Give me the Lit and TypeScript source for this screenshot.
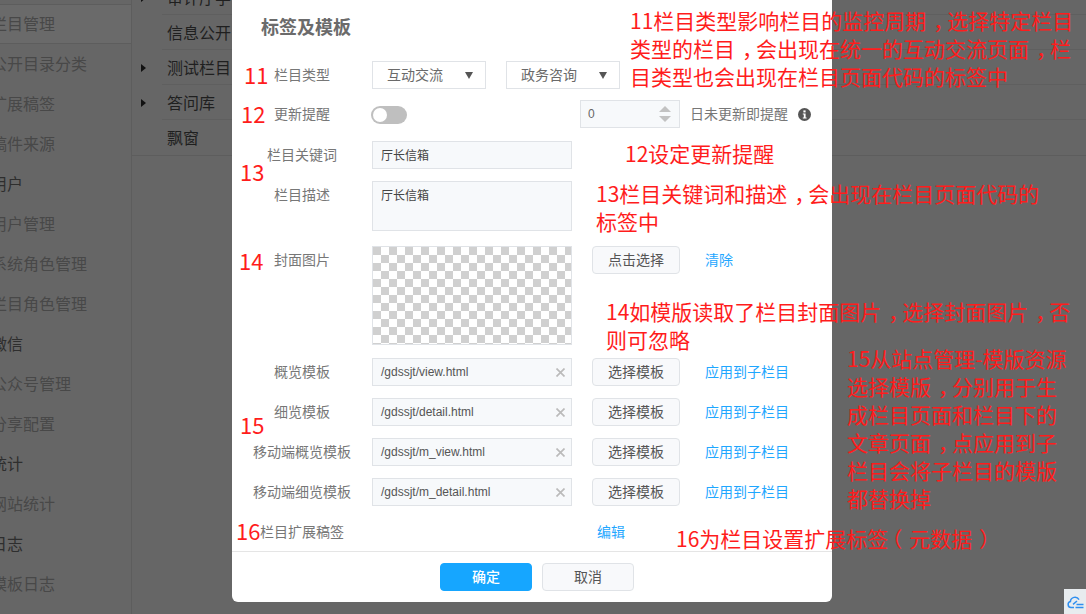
import { LitElement, html, css, svg } from "lit";
import { customElement } from "lit/decorators.js";

const SIDE = [
  ["栏目管理", "active"], ["公开目录分类", ""], ["扩展稿签", ""], ["稿件来源", ""],
  ["用户", "top"], ["用户管理", ""], ["系统角色管理", ""], ["栏目角色管理", ""],
  ["微信", "top"], ["公众号管理", ""], ["分享配置", ""],
  ["统计", "top"], ["网站统计", ""], ["日志", "top"], ["模板日志", ""],
];
const TREE: [string, boolean][] = [
  ["审计厅学习", true], ["信息公开", false], ["测试栏目", true], ["答问库", true], ["飘窗", false],
];
const TEMPLATES = [
  ["概览模板", "/gdssjt/view.html"],
  ["细览模板", "/gdssjt/detail.html"],
  ["移动端概览模板", "/gdssjt/m_view.html"],
  ["移动端细览模板", "/gdssjt/m_detail.html"],
];
const NOTES: { x: number; y: number; lines: string[] }[] = [
  { x: 630, y: 6, lines: ["11栏目类型影响栏目的监控周期，选择特定栏目", "类型的栏目，会出现在统一的互动交流页面，栏", "目类型也会出现在栏目页面代码的标签中"] },
  { x: 625, y: 139, lines: ["12设定更新提醒"] },
  { x: 596, y: 179, lines: ["13栏目关键词和描述，会出现在栏目页面代码的", "标签中"] },
  { x: 606, y: 297, lines: ["14如模版读取了栏目封面图片，选择封面图片，否", "则可忽略"] },
  { x: 847, y: 344, lines: ["15从站点管理-模版资源", "选择模版，分别用于生", "成栏目页面和栏目下的", "文章页面，点应用到子", "栏目会将子栏目的模版", "都替换掉"] },
  { x: 676, y: 524, lines: ["16为栏目设置扩展标签（元数据）"] },
];
const NUMS: [string, number, number][] = [
  ["11", 244, 76], ["12", 241, 115], ["13", 240, 173], ["14", 239, 262], ["15", 240, 426], ["16", 236, 532],
];

@customElement("app-root")
export class AppRoot extends LitElement {
  static styles = css`
    :host { display: block; width: 1086px; height: 614px; position: relative; overflow: hidden; background: #666;
      font-family: "Noto Sans CJK SC", "Liberation Sans", sans-serif; font-size: 14px; }
    * { box-sizing: border-box; }
    .bg { display: flex; height: 614px; }
    .side { width: 132px; flex: none; border-right: 1px solid #5d5d5d; padding-top: 4px; overflow: hidden; }
    .side-item { height: 40px; line-height: 38px; font-size: 16px; color: #484848; margin-left: -9px; white-space: nowrap; }
    .side-item.top { color: #2e2e2e; }
    .side-item.active { margin-left: 0; background: #6a6a6a; border-top: 1px solid #5d5d5d; border-bottom: 1px solid #5d5d5d; text-indent: -9px; line-height: 36px; }
    .tree { flex: 1; height: 176px; margin-top: -20px; border-bottom: 1px solid #5d5d5d; }
    .tree-row { display: flex; height: 35px; }
    .caret-cell { width: 30px; padding-left: 9px; display: flex; align-items: center; flex: none; }
    .caret { width: 0; height: 0; border-left: 5px solid #111; border-top: 4.5px solid transparent; border-bottom: 4.5px solid transparent; }
    .tree-text { flex: 1; padding-left: 5px; font-size: 16px; line-height: 34px; color: #1f1f1f; border-bottom: 1px solid #5f5f5f; }
    .tree-row:last-child .tree-text { border-bottom: none; }

    .dialog { position: absolute; left: 232px; top: 0; width: 600px; height: 602px; background: #fff; border-radius: 0 0 6px 6px; display: flex; flex-direction: column; }
    .title { height: 61px; padding: 13px 0 0 29px; font-size: 18px; font-weight: 700; line-height: 26px; color: #6b6b6b; }
    .body { flex: 1; padding-left: 20px; }
    .row { display: flex; align-items: flex-start; height: 28px; margin-top: 12px; }
    .row.first { margin-top: 0; }
    .row.r2 { margin-top: 11px; }
    .row.r3 { margin-top: 13px; }
    .row.desc { height: 50px; }
    .row.cover-row { height: 99px; margin-top: 15px; }
    .row.tpl0 { margin-top: 13px; }
    .label { width: 100px; flex: none; margin-right: 20px; text-align: center; line-height: 26px; color: #777; white-space: nowrap; }
    .select { width: 114px; height: 28px; border: 1px solid #e0e3e7; background: #fff; display: flex; align-items: center; justify-content: space-between; padding: 0 12px 2px 14px; color: #6a6a6a; margin-right: 20px; }
    .select i { width: 0; height: 0; margin-top: 2px; border-top: 7px solid #555; border-left: 4px solid transparent; border-right: 4px solid transparent; }
    .toggle { width: 36px; height: 18px; margin: 6px 0 0 -1px; border-radius: 9px; background: #bfbfbf; padding: 2px; flex: none; }
    .toggle i { display: block; width: 14px; height: 14px; border-radius: 50%; background: #fff; }
    .number { width: 100px; height: 28px; margin-left: 173px; border: 1px solid #e0e3e7; background: #f7f9fb; display: flex; align-items: center; justify-content: space-between; padding: 0 8px 0 7px; font-size: 12px; color: #666; font-family: "Liberation Sans", sans-serif; }
    .spin { display: flex; flex-direction: column; gap: 4px; }
    .spin i { width: 0; height: 0; border-left: 6px solid transparent; border-right: 6px solid transparent; }
    .spin .up { border-bottom: 6px solid #c2c2c2; }
    .spin .down { border-top: 6px solid #c2c2c2; }
    .hint { margin-left: 10px; line-height: 26px; color: #777; }
    .info { margin: 8px 0 0 10px; flex: none; }
    .input { width: 200px; height: 28px; border: 1px solid #e0e3e7; background: #f7f9fb; padding: 0 6px 0 8px; display: flex; align-items: center; justify-content: space-between; font-size: 12px; color: #555; flex: none; font-family: "Liberation Sans", "Noto Sans CJK SC", sans-serif; }
    .input.cn { font-family: "Noto Sans CJK SC", sans-serif; color: #444; padding-bottom: 2px; }
    .input.area { height: 50px; align-items: flex-start; padding-top: 4px; line-height: 18px; }
    .cover { width: 200px; height: 99px; flex: none; border: 1px solid #e0e3e7; background: repeating-conic-gradient(#d0d0d0 0 25%, #fff 0 50%) 8px 0 / 16px 16px; background-origin: padding-box; }
    .btn { width: 88px; height: 28px; margin-left: 20px; flex: none; border: 1px solid #e0e3e7; border-radius: 4px; background: #f8f9fb; color: #555; text-align: center; line-height: 24px; }
    .link { margin-left: 25px; line-height: 26px; color: #1fa7ff; white-space: nowrap; }
    .link.edit { margin-left: 225px; }
    .footer { height: 51px; flex: none; border-top: 1px solid #e5e5e5; display: flex; gap: 10px; padding: 11px 0 0 208px; }
    .fbtn { width: 92px; height: 28px; border-radius: 4px; text-align: center; line-height: 24px; border: 1px solid #e0e3e7; background: #f8f9fb; color: #555; }
    .fbtn.ok { background: #16a6ff; border-color: #16a6ff; color: #fff; font-weight: 500; }

    .note { position: absolute; color: #ff1c1c; font-size: 21px; line-height: 28px; white-space: nowrap; }
    .note span { display: inline-block; }
    .note .mid { transform: translateX(7px); }
    .note .lp { transform: translateX(-7px); }
    .num { position: absolute; color: #ff1c1c; font-size: 22px; line-height: 28px; transform: translateY(-16px); }
    .widget { position: absolute; right: 0; bottom: 0; width: 22px; height: 25px; background: #e8ecef; display: flex; align-items: center; justify-content: center; }
  `;

  private xIcon() {
    return html`<svg width="9" height="9" viewBox="0 0 9 9">${svg`<path d="M.5.5l8 8M8.5.5l-8 8" stroke="#bbb" stroke-width="1.7" fill="none"/>`}</svg>`;
  }

  private noteLine(line: string) {
    const parts = line.split(/([，）（])/);
    return html`<div>${parts.map((p) =>
      p === "，" || p === "）"
        ? html`<span class="mid">${p}</span>`
        : p === "（"
          ? html`<span class="lp">${p}</span>`
          : p
    )}</div>`;
  }

  render() {
    return html`
      <div class="bg">
        <div class="side">
          ${SIDE.map(([t, c]) => html`<div class="side-item ${c}">${t}</div>`)}
        </div>
        <div class="tree">
          ${TREE.map(([t, open]) => html`
            <div class="tree-row">
              <div class="caret-cell">${open ? html`<span class="caret"></span>` : ""}</div>
              <div class="tree-text">${t}</div>
            </div>`)}
        </div>
      </div>

      <div class="dialog">
        <div class="title">标签及模板</div>
        <div class="body">
          <div class="row first">
            <div class="label">栏目类型</div>
            <div class="select">互动交流<i></i></div>
            <div class="select">政务咨询<i></i></div>
          </div>
          <div class="row r2">
            <div class="label">更新提醒</div>
            <div class="toggle"><i></i></div>
            <div class="number">0<div class="spin"><i class="up"></i><i class="down"></i></div></div>
            <div class="hint">日未更新即提醒</div>
            <svg class="info" width="13" height="13" viewBox="0 0 13 13">
              <circle cx="6.5" cy="6.5" r="6.5" fill="#555"/>
              <rect x="5.4" y="2.4" width="2.2" height="2" fill="#fff"/>
              <path d="M4.8 5.4h2.8v4h1v1.2H4.8V9.4h1V6.6h-1z" fill="#fff"/>
            </svg>
          </div>
          <div class="row r3">
            <div class="label">栏目关键词</div>
            <div class="input cn">厅长信箱</div>
          </div>
          <div class="row desc">
            <div class="label">栏目描述</div>
            <div class="input cn area">厅长信箱</div>
          </div>
          <div class="row cover-row">
            <div class="label">封面图片</div>
            <div class="cover"></div>
            <div class="btn">点击选择</div>
            <div class="link">清除</div>
          </div>
          ${TEMPLATES.map(([l, v], i) => html`
            <div class="row ${i === 0 ? "tpl0" : ""}">
              <div class="label">${l}</div>
              <div class="input">${v}${this.xIcon()}</div>
              <div class="btn">选择模板</div>
              <div class="link">应用到子栏目</div>
            </div>`)}
          <div class="row">
            <div class="label">栏目扩展稿签</div>
            <div class="link edit">编辑</div>
          </div>
        </div>
        <div class="footer">
          <div class="fbtn ok">确定</div>
          <div class="fbtn">取消</div>
        </div>
      </div>

      ${NOTES.map((n) => html`<div class="note" style="left:${n.x}px;top:${n.y}px">${n.lines.map((l) => this.noteLine(l))}</div>`)}
      ${NUMS.map(([t, x, y]) => html`<div class="num" style="left:${x}px;top:${y}px">${t}</div>`)}

      <div class="widget">
        <svg width="17" height="14" viewBox="0 0 17 14" fill="none" stroke="#2f8ff0" stroke-width="1.5">
          <path d="M7 12.5H4a3 3 0 0 1-.6-5.9A4.6 4.6 0 0 1 12 4.6"/>
          <path d="M6 9.4 10 6M8.5 12.5h8M9.5 9.5h7"/>
        </svg>
      </div>
    `;
  }
}
